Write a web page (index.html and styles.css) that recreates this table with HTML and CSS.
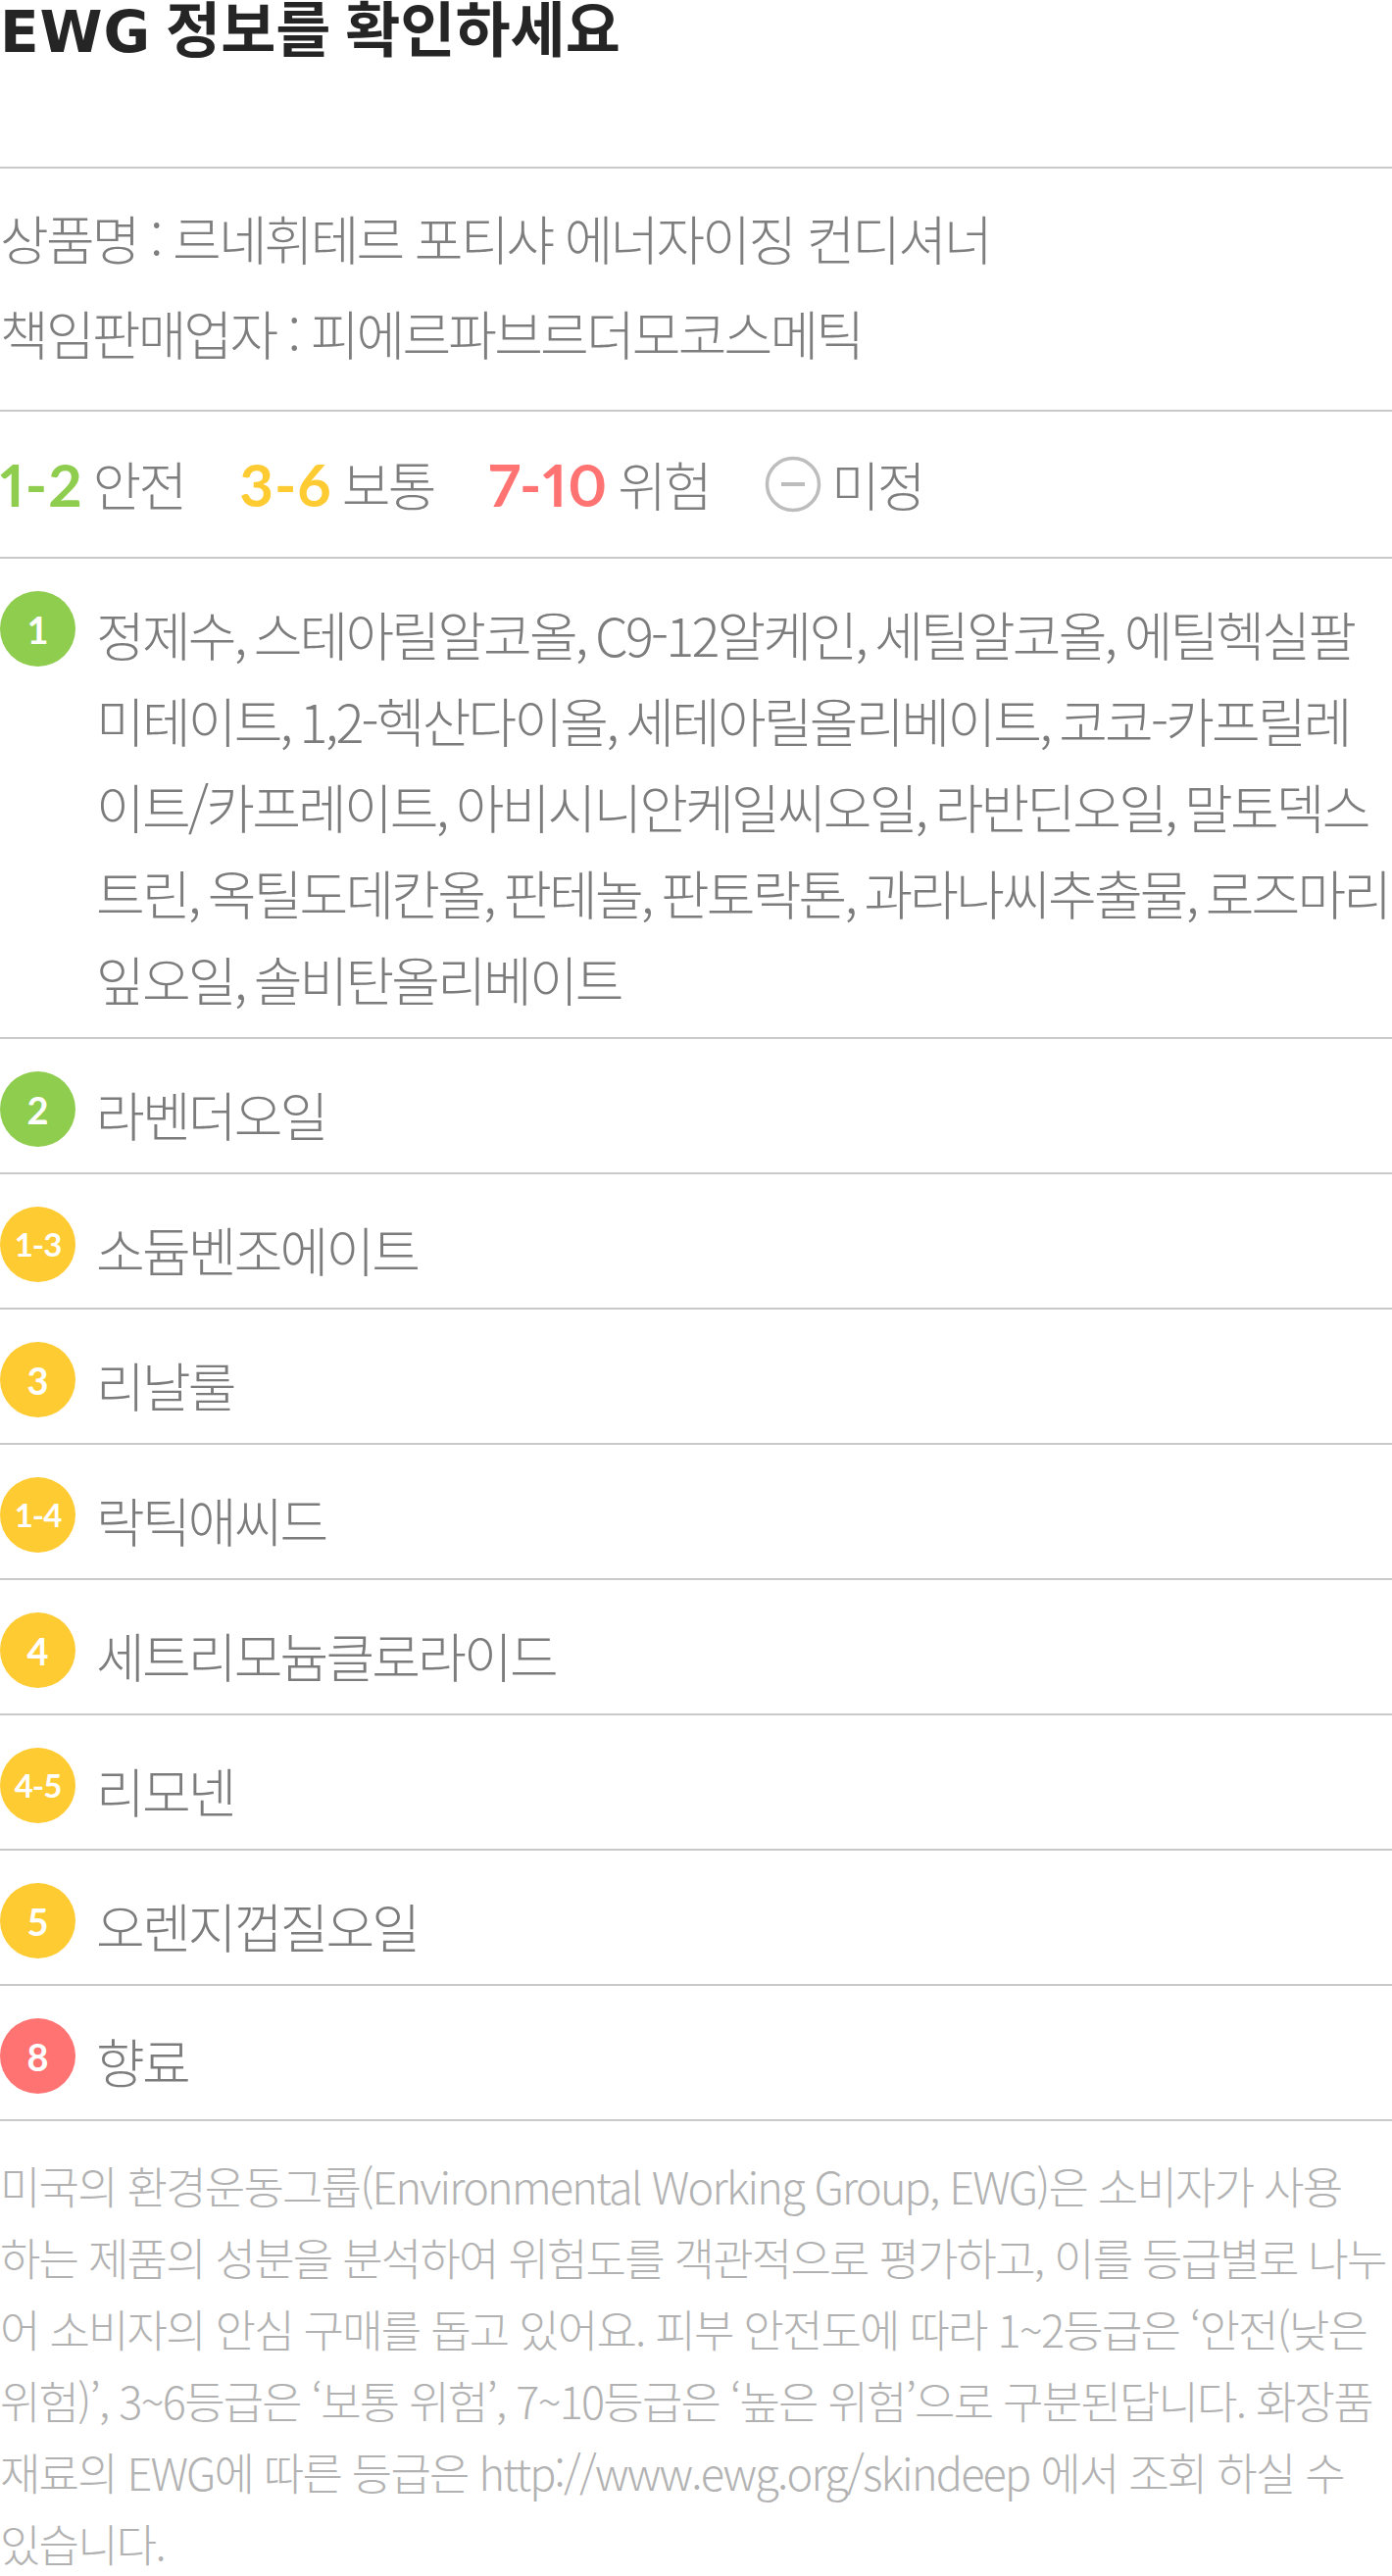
FILE: index.html
```html
<!DOCTYPE html>
<html lang="ko">
<head>
<meta charset="utf-8">
<title>EWG 정보</title>
<link rel="stylesheet" href="styles.css">
</head>
<body>
<div class="page">
  <h1 class="title"><span class="title-en">EWG</span> 정보를 확인하세요</h1>

  <section class="info">
    <p class="info-line">상품명 : 르네휘테르 포티샤 에너자이징 컨디셔너</p>
    <p class="info-line">책임판매업자 : 피에르파브르더모코스메틱</p>
  </section>

  <section class="legend">
    <div class="legend-item"><span class="legend-num green">1-2</span><span class="legend-label">안전</span></div>
    <div class="legend-item"><span class="legend-num yellow">3-6</span><span class="legend-label">보통</span></div>
    <div class="legend-item"><span class="legend-num red">7-10</span><span class="legend-label">위험</span></div>
    <div class="legend-item">
      <svg class="legend-icon" viewBox="0 0 58 58" width="58" height="58" aria-hidden="true">
        <circle cx="29" cy="29" r="26.5" fill="none" stroke="#bdbdbd" stroke-width="3.5"/>
        <line x1="17" y1="29" x2="41" y2="29" stroke="#bdbdbd" stroke-width="4"/>
      </svg>
      <span class="legend-label">미정</span>
    </div>
  </section>

  <ul class="ingredients">
    <li class="row"><span class="badge green">1</span><span class="name">정제수, 스테아릴알코올, C9-12알케인, 세틸알코올, 에틸헥실팔<br>미테이트, 1,2-헥산다이올, 세테아릴올리베이트, 코코-카프릴레<br>이트/카프레이트, 아비시니안케일씨오일, 라반딘오일, 말토덱스<br>트린, 옥틸도데칸올, 판테놀, 판토락톤, 과라나씨추출물, 로즈마리<br>잎오일, 솔비탄올리베이트</span></li>
    <li class="row"><span class="badge green">2</span><span class="name">라벤더오일</span></li>
    <li class="row"><span class="badge yellow range">1-3</span><span class="name">소듐벤조에이트</span></li>
    <li class="row"><span class="badge yellow">3</span><span class="name">리날룰</span></li>
    <li class="row"><span class="badge yellow range">1-4</span><span class="name">락틱애씨드</span></li>
    <li class="row"><span class="badge yellow">4</span><span class="name">세트리모늄클로라이드</span></li>
    <li class="row"><span class="badge yellow range">4-5</span><span class="name">리모넨</span></li>
    <li class="row"><span class="badge yellow">5</span><span class="name">오렌지껍질오일</span></li>
    <li class="row"><span class="badge red">8</span><span class="name">향료</span></li>
  </ul>

  <p class="note">미국의 환경운동그룹(Environmental Working Group, EWG)은 소비자가 사용<br>하는 제품의 성분을 분석하여 위험도를 객관적으로 평가하고, 이를 등급별로 나누<br>어 소비자의 안심 구매를 돕고 있어요. 피부 안전도에 따라 1~2등급은 ‘안전(낮은<br>위험)’, 3~6등급은 ‘보통 위험’, 7~10등급은 ‘높은 위험’으로 구분된답니다. 화장품<br>재료의 EWG에 따른 등급은 http://www.ewg.org/skindeep 에서 조회 하실 수<br>있습니다.</p>
</div>
</body>
</html>
```

FILE: styles.css
```css
html, body {
  margin: 0;
  padding: 0;
  background: #ffffff;
}

.page {
  width: 1420px;
  overflow: hidden;
  font-family: "Noto Sans CJK KR", "Noto Sans", sans-serif;
  font-weight: 300;
  color: #808080;
}

.title {
  margin: 0;
  padding: 0 0 111px;
  font-family: "Lato", "Noto Sans CJK KR", sans-serif;
  font-size: 61px;
  line-height: 59px;
  font-weight: 700;
  color: #252525;
  border-bottom: 2px solid #c9c9c9;
}

.title-en {
  font-family: "DejaVu Sans", "Lato", sans-serif;
  font-size: 58px;
  line-height: 50px;
  letter-spacing: 1px;
}

.info {
  padding: 22px 0 30px;
  border-bottom: 2px solid #c9c9c9;
}

.info-line {
  margin: 0;
  font-size: 54px;
  line-height: 97px;
  letter-spacing: -2.8px;
  color: #7e7e7e;
  white-space: nowrap;
}

.legend {
  display: flex;
  align-items: center;
  gap: 56px;
  height: 148px;
  border-bottom: 2px solid #c9c9c9;
}

.legend-item {
  display: flex;
  align-items: center;
  gap: 10px;
}

.legend-num {
  font-family: "Lato", sans-serif;
  font-weight: 700;
  font-size: 60px;
  font-feature-settings: "pnum" 1;
  letter-spacing: 1px;
  line-height: 1;
}

.legend-num.green { color: #8fcd4f; }
.legend-num.yellow { color: #ffcb33; }
.legend-num.red { color: #ff7373; }

.legend-icon {
  display: block;
  flex: 0 0 58px;
}

.legend-label {
  font-size: 54px;
  letter-spacing: -2.8px;
  line-height: 1;
  color: #7e7e7e;
}

.ingredients {
  list-style: none;
  margin: 0;
  padding: 0;
}

.row {
  display: flex;
  align-items: flex-start;
  padding: 33px 0 15px;
  border-bottom: 2px solid #c9c9c9;
}

.badge {
  flex: 0 0 77px;
  height: 77px;
  margin-right: 21px;
  border-radius: 50%;
  display: flex;
  align-items: center;
  justify-content: center;
  font-family: "Lato", sans-serif;
  font-weight: 700;
  font-size: 38px;
  line-height: 1;
  color: #ffffff;
}

.badge.range {
  font-size: 33px;
  letter-spacing: -1px;
}

.badge.green { background: #8fcd4f; }
.badge.yellow { background: #ffcb33; }
.badge.red { background: #ff7373; }

.name {
  flex: 1 1 auto;
  min-width: 0;
  font-size: 54px;
  line-height: 88px;
  letter-spacing: -2.8px;
  word-spacing: -3px;
  color: #7c7c7c;
  white-space: nowrap;
}

.note {
  margin: 0;
  padding: 29px 0 0;
  font-size: 45px;
  line-height: 73px;
  letter-spacing: -1.8px;
  color: #b2b2b2;
  white-space: nowrap;
}
```
